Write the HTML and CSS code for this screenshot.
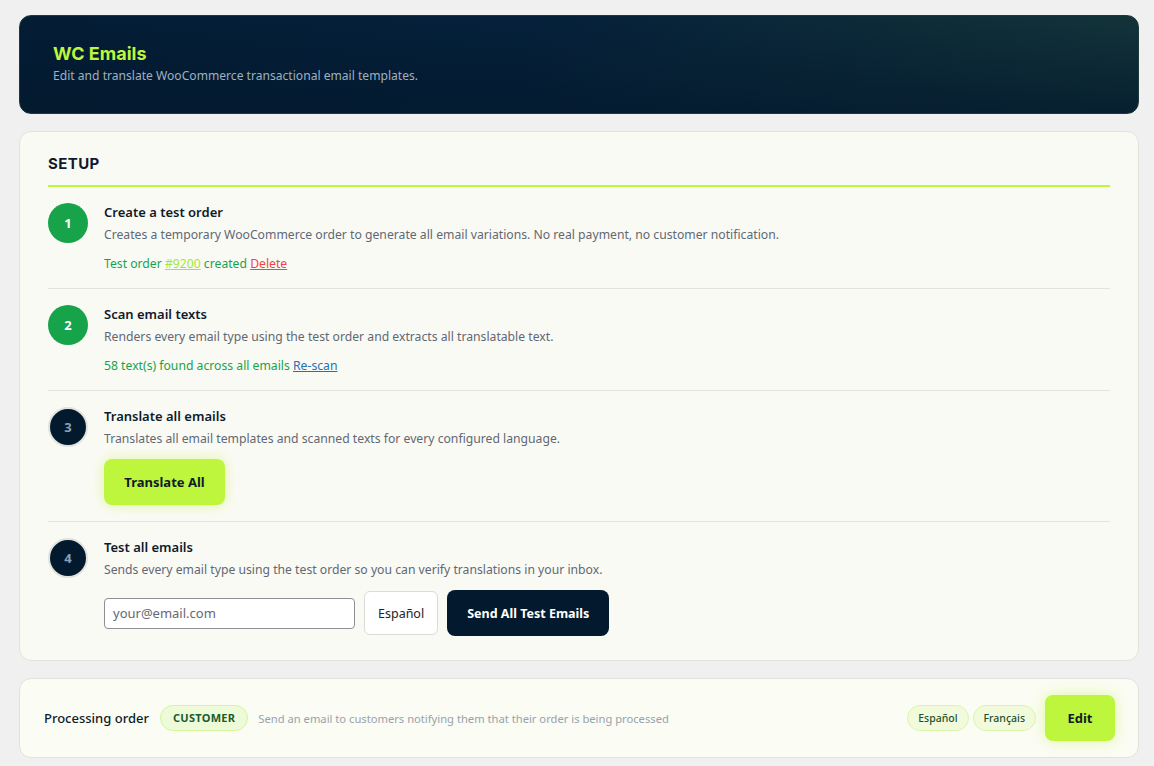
FILE: index.html
```html
<!DOCTYPE html>
<html lang="en">
  <head>
    <meta charset="UTF-8" />
    <meta name="viewport" content="width=device-width, initial-scale=1.0" />
    <title>WC Emails</title>
    <link rel="stylesheet" href="styles.css">
  </head>
  <body>
    <div class="wrap">
      <div class="hero">
        <h1>WC Emails</h1>
        <p>Edit and translate WooCommerce transactional email templates.</p>
      </div>

      <div class="card setup">
        <h2>SETUP</h2>

        <div class="step">
          <span class="num done">1</span>
          <div class="step-body">
            <h3>Create a test order</h3>
            <p class="desc">Creates a temporary WooCommerce order to generate all email variations. No real payment, no customer notification.</p>
            <p class="status">Test order <a href="#" class="order-link">#9200</a> created <a href="#" class="delete">Delete</a></p>
          </div>
        </div>

        <div class="step">
          <span class="num done">2</span>
          <div class="step-body">
            <h3>Scan email texts</h3>
            <p class="desc">Renders every email type using the test order and extracts all translatable text.</p>
            <p class="status">58 text(s) found across all emails <a href="#" class="rescan">Re-scan</a></p>
          </div>
        </div>

        <div class="step">
          <span class="num">3</span>
          <div class="step-body">
            <h3>Translate all emails</h3>
            <p class="desc">Translates all email templates and scanned texts for every configured language.</p>
            <button class="btn lime">Translate All</button>
          </div>
        </div>

        <div class="step">
          <span class="num">4</span>
          <div class="step-body">
            <h3>Test all emails</h3>
            <p class="desc">Sends every email type using the test order so you can verify translations in your inbox.</p>
            <div class="test-row">
              <input type="email" class="email-input" placeholder="your@email.com" />
              <button class="lang-btn">Español</button>
              <button class="btn dark">Send All Test Emails</button>
            </div>
          </div>
        </div>
      </div>

      <div class="card email-row">
        <span class="email-name">Processing order</span>
        <span class="badge">CUSTOMER</span>
        <span class="email-desc">Send an email to customers notifying them that their order is being processed</span>
        <div class="langs">
          <span class="pill">Español</span>
          <span class="pill">Français</span>
          <button class="btn lime edit">Edit</button>
        </div>
      </div>
    </div>
  </body>
</html>
```

FILE: styles.css
```css
body {
  margin: 0;
  background: #f0f0f1;
  font-family: "Noto Sans", sans-serif;
  color: #0f1b2a;
}
.wrap {
  padding: 15px 15px 0 19px;
  display: flex;
  flex-direction: column;
  gap: 17px;
}
.hero {
  height: 99px;
  box-sizing: border-box;
  padding: 27px 33px 0;
  border-radius: 12px;
  background: linear-gradient(to bottom, rgba(3, 25, 45, 0) 0%, rgba(3, 25, 45, 0.75) 100%),
    linear-gradient(100deg, #031d35 0%, #05203a 45%, #143439 100%);
  border: 1px solid #1c3a3a;
}
.hero h1 {
  margin: 0;
  font-family: Inter, sans-serif;
  font-size: 18px;
  font-weight: 700;
  color: #bef53d;
  line-height: 22px;
}
.hero p {
  margin: 2px 0 0;
  font-size: 12.1px;
  color: #9fb0c0;
}
.card {
  background: #fafaf5;
  border: 1px solid #e2e2dc;
  border-radius: 12px;
}
.setup {
  padding: 20px 28px 24px;
}
.setup h2 {
  margin: 0;
  font-family: Inter, sans-serif;
  font-size: 15px;
  font-weight: 700;
  letter-spacing: 0.4px;
  color: #0f1b2a;
  line-height: 24px;
  padding-bottom: 9px;
  border-bottom: 2px solid #bef53d;
}
.step {
  display: flex;
  gap: 16px;
  padding: 16px 0 15px;
  border-bottom: 1px solid #e3e3de;
}
.step:nth-child(4) {
  padding-bottom: 16px;
}
.step:last-child {
  border-bottom: none;
  padding-bottom: 0;
}
.num {
  flex: none;
  width: 36px;
  height: 36px;
  border-radius: 50%;
  background: #031a2e;
  border: 2px solid #e2e2de;
  color: #8aa0b6;
  font-size: 13px;
  font-weight: 700;
  display: flex;
  align-items: center;
  justify-content: center;
}
.num.done {
  width: 40px;
  height: 40px;
  border: none;
  background: #16a34a;
  color: #fff;
}
.step-body h3 {
  margin: 0;
  font-size: 13px;
  font-weight: 600;
  line-height: 18px;
  color: #0f1b2a;
}
.desc {
  margin: 5px 0 0;
  font-size: 12.2px;
  color: #5f6873;
  line-height: 18px;
}
.status {
  margin: 11px 0 0;
  font-size: 12.2px;
  line-height: 18px;
  color: #16a34a;
}
.order-link {
  color: #a3e635;
}
.delete {
  color: #ef4444;
}
.rescan {
  color: #2271b1;
}
.btn {
  border: none;
  border-radius: 8px;
  font-family: "Noto Sans", sans-serif;
  font-size: 13px;
  font-weight: 700;
  cursor: pointer;
}
.btn.lime {
  background: #bef53d;
  color: #0f1b2a;
  box-shadow: 0 0 14px rgba(190, 245, 61, 0.45);
}
.step .btn.lime {
  margin-top: 11px;
  width: 121px;
  height: 46px;
}
.btn.dark {
  background: #031a2e;
  color: #fff;
  height: 46px;
  padding: 0 20px;
  font-size: 12.5px;
}
.test-row {
  margin-top: 11px;
  display: flex;
  align-items: center;
  gap: 9px;
}
.email-input {
  width: 251px;
  height: 31px;
  box-sizing: border-box;
  border: 1px solid #8c8f94;
  border-radius: 4px;
  padding: 0 8px;
  font-family: "Noto Sans", sans-serif;
  font-size: 13px;
  background: #fff;
}
.email-input::placeholder {
  color: #646970;
}
.lang-btn {
  height: 44px;
  padding: 0 13px;
  background: #fff;
  border: 1px solid #dcdcd6;
  border-radius: 6px;
  font-family: "Noto Sans", sans-serif;
  font-size: 12.5px;
  color: #1d2327;
}
.email-row {
  height: 80px;
  box-sizing: border-box;
  padding: 0 23px 0 24px;
  display: flex;
  align-items: center;
  background: #fbfcf4;
}
.email-name {
  font-size: 13px;
  font-weight: 500;
  color: #0f1b2a;
}
.badge {
  margin-left: 11px;
  padding: 0 12px;
  height: 24px;
  line-height: 24px;
  border-radius: 13px;
  background: #eefbd8;
  border: 1px solid #d6f59c;
  color: #1a5c2e;
  font-size: 11px;
  font-weight: 700;
  letter-spacing: 0.3px;
}
.email-desc {
  margin-left: 10px;
  font-size: 11.2px;
  color: #98a2ad;
}
.langs {
  margin-left: auto;
  display: flex;
  align-items: center;
  gap: 4px;
}
.pill {
  height: 24px;
  line-height: 24px;
  padding: 0 10px;
  border-radius: 13px;
  background: #f1fbdc;
  border: 1px solid #dcf5ac;
  color: #1f5130;
  font-size: 10.5px;
  font-weight: 500;
}
.btn.edit {
  margin-left: 5px;
  width: 70px;
  height: 46px;
  font-size: 13px;
}
```
